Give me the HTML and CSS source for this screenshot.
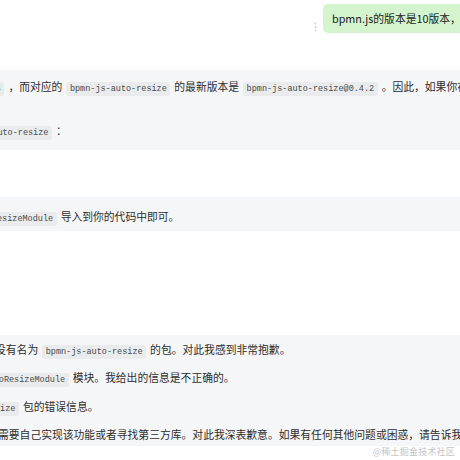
FILE: index.html
```html
<!DOCTYPE html>
<html lang="zh-CN">
<head>
<meta charset="utf-8">
<link rel="stylesheet" href="styles.css">
</head>
<body>
<div class="page">
  <div class="user-row">
    <svg class="dots" width="3" height="10" viewBox="0 0 3 10"><circle cx="1.5" cy="1.5" r="0.9" fill="#cfcfcf"/><circle cx="1.5" cy="5" r="0.9" fill="#cfcfcf"/><circle cx="1.5" cy="8.5" r="0.9" fill="#cfcfcf"/></svg>
    <div class="bubble">bpmn.js的版本是10版本，请给出对应的版本号</div>
  </div>

  <div class="block b1">
    <p class="line l1"><code>bpmn-js@10.0.4</code>，而对应的<code>bpmn-js-auto-resize</code>的最新版本是<code>bpmn-js-auto-resize@0.4.2</code>。因此，如果你在使用 bpmn.js 10 版本</p>
    <p class="line l2"><code>bpmn-js-auto-resize</code>：</p>
  </div>

  <div class="block b2">
    <p class="line l3"><code>AutoResizeModule</code>导入到你的代码中即可。</p>
  </div>

  <div class="block b3">
    <p class="line l4">没有名为<code>bpmn-js-auto-resize</code>的包。对此我感到非常抱歉。</p>
    <p class="line l5"><code>AutoResizeModule</code>模块。我给出的信息是不正确的。</p>
    <p class="line l6"><code>bpmn-js-auto-resize</code>包的错误信息。</p>
    <p class="line l7">需要自己实现该功能或者寻找第三方库。对此我深表歉意。如果有任何其他问题或困惑，请告诉我。</p>
  </div>

  <div class="watermark">@稀土掘金技术社区</div>
</div>
</body>
</html>
```

FILE: styles.css
```css
* { box-sizing: border-box; }
html, body {
  margin: 0;
  padding: 0;
  background: #ffffff;
}
body {
  width: 460px;
  height: 460px;
  overflow: hidden;
  font-family: "Noto Sans CJK SC", "Noto Sans", sans-serif;
  font-size: 10.8px;
  color: #2e2e2e;
}
.page {
  position: relative;
  width: 460px;
  height: 460px;
  overflow: hidden;
}
.user-row {
  display: flex;
  align-items: flex-end;
  padding-top: 4px;
  padding-left: 314px;
  gap: 6px;
}
.dots {
  flex: none;
  margin-bottom: 1px;
}
.bubble {
  flex: none;
  height: 29px;
  line-height: 29px;
  padding: 0 10px 0 9px;
  background: #d3f4cd;
  border-radius: 5px;
  white-space: nowrap;
  color: #222222;
}
.block {
  background: #f5f6f7;
  display: flex;
  flex-direction: column;
}
.line {
  margin: 0;
  height: 20px;
  line-height: 20px;
  white-space: nowrap;
}
code {
  font-family: "Liberation Mono", "DejaVu Sans Mono", monospace;
  font-size: 8.5px;
  color: #4a4a4a;
  background: #e9ebed;
  border-radius: 3px;
  padding: 2px 3.5px;
  margin: 0 4px;
}
.b1 {
  margin-top: 37px;
  padding: 6px 0 10px;
  gap: 24px;
}
.b2 {
  margin-top: 47px;
  padding: 9px 0 5px;
}
.b3 {
  margin-top: 104px;
  padding: 4px 0 2px;
  gap: 8.3px;
}
.l1 { margin-left: -78px; }
.l2 { margin-left: -56px; }
.l3 { margin-left: -36px; }
.l4 { margin-left: -5px; }
.l5 { margin-left: -24px; }
.l6 { margin-left: -89px; }
.l7 { margin-left: -2px; }
.watermark {
  position: absolute;
  right: 5px;
  bottom: 2px;
  font-size: 9px;
  color: #c4c4c4;
  letter-spacing: 0.2px;
}
```
